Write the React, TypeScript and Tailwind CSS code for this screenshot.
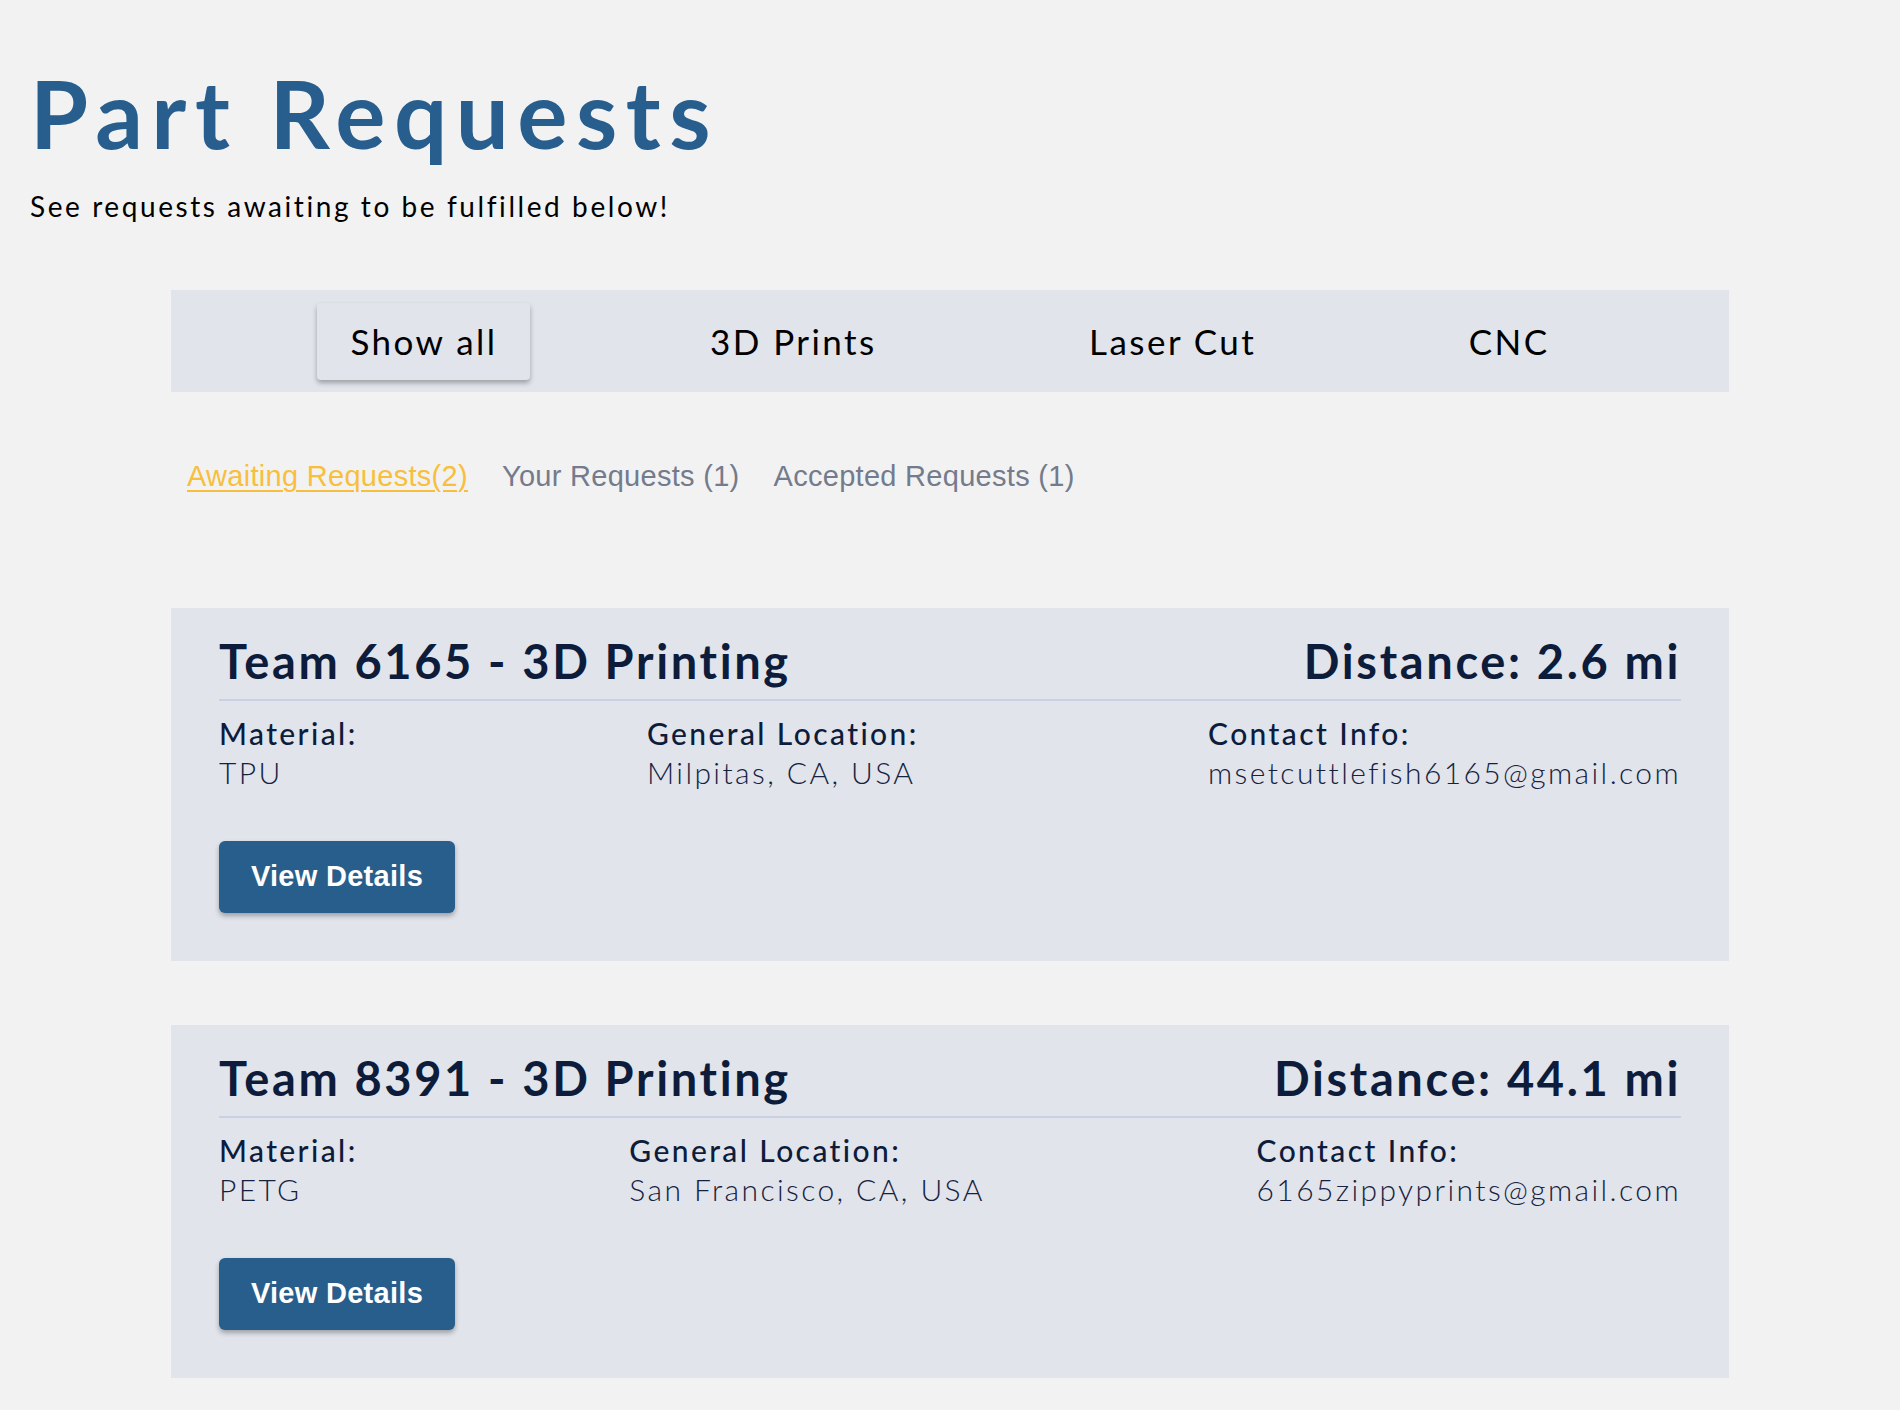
import React, { useState } from "react";

type Request = {
    id: number;
    team: string;
    kind: string;
    distance: string;
    material: string;
    location: string;
    contact: string;
};

const requests: Request[] = [
    {
        id: 1,
        team: "6165",
        kind: "3D Printing",
        distance: "2.6 mi",
        material: "TPU",
        location: "Milpitas, CA, USA",
        contact: "msetcuttlefish6165@gmail.com",
    },
    {
        id: 2,
        team: "8391",
        kind: "3D Printing",
        distance: "44.1 mi",
        material: "PETG",
        location: "San Francisco, CA, USA",
        contact: "6165zippyprints@gmail.com",
    },
];

const filters = ["Show all", "3D Prints", "Laser Cut", "CNC"];

const RequestCard: React.FC<{ data: Request }> = ({ data }) => {
    return (
        <div className="bg-[#e1e4eb] px-12 pt-[30px] pb-12">
            <div className="flex justify-between items-end border-b-2 border-[#c8d1e3] pb-[14px] text-[47px] leading-none font-bold tracking-[0.056em] text-[#0d1c3b]">
                <h2>Team {data.team} - {data.kind}</h2>
                <span>Distance: {data.distance}</span>
            </div>
            <div className="flex justify-between mt-[13px] text-[30px] leading-[39px] tracking-[0.08em] text-[#0d1c3b]">
                <div>
                    <div className="font-medium">Material:</div>
                    <div className="font-light text-[#15223f]">{data.material}</div>
                </div>
                <div>
                    <div className="font-medium">General Location:</div>
                    <div className="font-light text-[#15223f]">{data.location}</div>
                </div>
                <div>
                    <div className="font-medium">Contact Info:</div>
                    <div className="font-light text-[#15223f]">{data.contact}</div>
                </div>
            </div>
            <button className="mt-[49px] h-[72px] w-[236px] rounded-md bg-[#285e8b] text-white text-[29px] font-bold font-['Liberation_Sans',sans-serif] tracking-[0.01em] shadow-[0_3px_5px_rgba(0,0,0,0.3)]">
                View Details
            </button>
        </div>
    );
};

const App: React.FC = () => {
    const [active, setActive] = useState<string>("Show all");

    return (
        <div className="min-h-screen bg-[#f2f2f2] font-['Lato',sans-serif] pb-10">
            <div className="pl-[30px] pt-[66px]">
                <h1 className="text-[94px] leading-none font-bold tracking-[0.09em] text-[#285e8d]">Part Requests</h1>
                <p className="mt-[32px] text-[28px] leading-none tracking-[0.092em] text-black">See requests awaiting to be fulfilled below!</p>
            </div>

            <div className="mx-auto w-[1558px] mt-[70px]">
                <div className="h-[102px] bg-[#e1e4eb] flex items-center justify-evenly">
                    {filters.map((f) => (
                        <button
                            key={f}
                            onClick={() => setActive(f)}
                            className={
                                f === active
                                    ? "h-[77px] px-[33px] rounded text-[35px] tracking-[0.07em] text-black bg-[#e1e4eb] shadow-[0_3px_5px_rgba(0,0,0,0.3)]"
                                    : "h-[77px] px-[33px] rounded text-[35px] tracking-[0.07em] text-black"
                            }
                        >
                            {f}
                        </button>
                    ))}
                </div>

                <div className="flex gap-[34px] pl-[16px] mt-[68px] text-[29px] leading-[32px] font-['Liberation_Sans',sans-serif] tracking-[0.01em]">
                    <span className="text-[#f7bf3d] underline underline-offset-4 decoration-2">Awaiting Requests(2)</span>
                    <span className="text-[#737b8c]">Your Requests (1)</span>
                    <span className="text-[#737b8c]">Accepted Requests (1)</span>
                </div>

                <div className="mt-[116px] flex flex-col gap-16">
                    {requests.map((r) => (
                        <RequestCard key={r.id} data={r} />
                    ))}
                </div>
            </div>
        </div>
    );
};

export default App;
